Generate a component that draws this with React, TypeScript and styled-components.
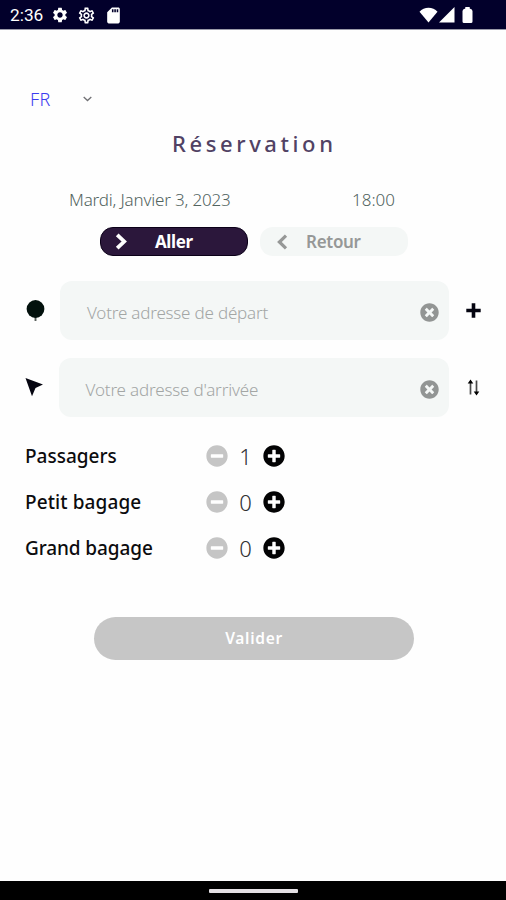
import React from "react";
import styled, { createGlobalStyle } from "styled-components";
import { FaMinusCircle, FaPlusCircle, FaTimesCircle } from "react-icons/fa";
import { MdOutlineSettings, MdSdCard, MdSettings } from "react-icons/md";

const GlobalStyle = createGlobalStyle`
  *, *::before, *::after { box-sizing: border-box; }
  body { margin: 0; background: #fefefe; }
  button { font: inherit; border: 0; padding: 0; background: none; }
  svg { display: block; flex: none; }
`;

const Screen = styled.div`
  display: flex;
  flex-direction: column;
  width: 506px;
  height: 900px;
  overflow: hidden;
  background: #fefefe;
  font-family: "Noto Sans", "Open Sans", sans-serif;
`;

const StatusBar = styled.header`
  display: flex;
  justify-content: space-between;
  height: 30px;
  padding: 1px 33px 0 10px;
  border-bottom: 1px solid #9a9aa8;
  background: #02002b;
  color: #fff;
`;

const StatusGroup = styled.div<{ $gap: number }>`
  display: flex;
  align-items: center;
  gap: ${(p) => p.$gap}px;
`;

const Clock = styled.span`
  width: 33px;
  font: 400 17.3px/28px Roboto, sans-serif;
  white-space: nowrap;
`;

const Content = styled.main`
  display: flex;
  flex: 1;
  flex-direction: column;
  padding-top: 54px;
`;

const Language = styled.button`
  display: flex;
  align-items: center;
  gap: 32px;
  height: 30px;
  padding-left: 30px;
  color: #3c3cf0;
  font-size: 18px;
  font-weight: 300;
  letter-spacing: 0.3px;
  line-height: 30px;
`;

const Title = styled.h1`
  height: 30px;
  margin: 14px 0 0 172px;
  color: #514264;
  font-size: 22px;
  font-weight: 460;
  line-height: 30px;
  letter-spacing: 3.6px;
  white-space: nowrap;
`;

const Schedule = styled.div`
  display: flex;
  height: 26px;
  margin-top: 28px;
  padding-left: 69px;
  color: #52645f;
  font-size: 17px;
  font-weight: 300;
  line-height: 28px;
  white-space: nowrap;
`;

const DateText = styled.span`
  width: 283px;
  letter-spacing: -0.18px;
`;

const TimeText = styled.span`
  letter-spacing: 0;
`;

const Trips = styled.div`
  display: flex;
  gap: 12px;
  margin-top: 15px;
  padding-left: 100px;
`;

const Trip = styled.button<{ $active?: boolean }>`
  display: flex;
  align-items: center;
  gap: ${(p) => (p.$active ? 27 : 18)}px;
  width: 148px;
  height: 29px;
  padding-left: ${(p) => (p.$active ? 14 : 16)}px;
  border: ${(p) => (p.$active ? "1.5px solid #0b0018" : "0")};
  border-radius: 13px;
  background: ${(p) => (p.$active ? "#2b173b" : "#f4f7f6")};
  color: ${(p) => (p.$active ? "#fff" : "#969897")};
  font-size: 17px;
  font-weight: ${(p) => (p.$active ? 700 : 600)};
  letter-spacing: ${(p) => (p.$active ? -0.4 : -0.3)}px;
  line-height: 28px;
`;

const Addresses = styled.div`
  display: flex;
  flex-direction: column;
  gap: 18px;
  margin-top: 25px;
`;

const AddressRow = styled.div`
  display: grid;
  grid-template-columns: 58px 391px 1fr;
  align-items: center;
  height: 59px;
`;

const Lead = styled.div`
  padding-left: 25px;
`;

const Field = styled.div<{ $inset: number }>`
  display: flex;
  align-items: center;
  justify-content: space-between;
  height: 100%;
  margin-left: ${(p) => p.$inset}px;
  padding: 4px 10px 0 27px;
  border-radius: 12px;
  background: #f4f7f6;
`;

const Placeholder = styled.span<{ $spacing: number }>`
  color: #a3a6a5;
  font-size: 17px;
  font-weight: 300;
  letter-spacing: ${(p) => p.$spacing}px;
  white-space: nowrap;
`;

const Trail = styled.div`
  display: flex;
  justify-content: center;
  padding-right: 8px;
`;

const Counters = styled.div`
  display: flex;
  flex-direction: column;
  margin-top: 16px;
`;

const Counter = styled.div`
  display: flex;
  align-items: center;
  height: 46px;
  padding-left: 25px;
  color: #0c0c0e;
`;

const CounterLabel = styled.span<{ $spacing: number }>`
  width: 181px;
  font-size: 19px;
  font-weight: 500;
  letter-spacing: ${(p) => p.$spacing}px;
  white-space: nowrap;
`;

const CounterValue = styled.span`
  width: 35px;
  color: #303033;
  font-size: 22px;
  font-weight: 300;
  text-align: center;
`;

const CounterButton = styled.button<{ $off?: boolean }>`
  color: ${(p) => (p.$off ? "#c5c5c5" : "#030304")};
`;

const Submit = styled.button`
  width: 320px;
  height: 43px;
  margin: 46px 0 0 94px;
  border-radius: 22px;
  background: #c6c6c6;
  color: #fff;
  font-size: 15.5px;
  font-weight: 600;
  letter-spacing: 0.7px;
  line-height: 43px;
`;

const HomeBar = styled.footer`
  display: flex;
  justify-content: center;
  height: 19px;
  padding-top: 8px;
  background: #000;
`;

const HomeHandle = styled.div`
  width: 89px;
  height: 4px;
  border-radius: 1px;
  background: #e4e0e4;
`;

const WifiIcon = () => (
  <svg width="19" height="16" viewBox="0 0 19 16" fill="#fff">
    <path d="M9.500 15.500.5 4.800C5 -.5 14 -.5 18.500 4.800Z" />
  </svg>
);

const SignalIcon = () => (
  <svg width="16" height="16" viewBox="0 0 16 16" fill="#fff">
    <path d="M0 15.500 15.500 0V15.500Z" />
  </svg>
);

const BatteryIcon = () => (
  <svg width="11" height="16" viewBox="0 0 11 16" fill="#fff">
    <path d="M3.300 0h4.400v1.500Q10.500 2 10.500 4v10.500Q10.500 16 9 16H2Q.5 16 .5 14.500V4Q.5 2 3.300 1.500Z" />
  </svg>
);

const Battery = styled.div`
  margin-left: 6px;
`;

const ChevronDown = () => (
  <svg width="9" height="6" viewBox="0 0 9 6" fill="none" stroke="#707074" strokeWidth="1.300">
    <path d="m.7 1 3.800 3.500L8.300 1" />
  </svg>
);

const ForwardIcon = () => (
  <svg width="13" height="17" viewBox="0 0 13 17" fill="none" stroke="currentColor" strokeWidth="3.800">
    <path d="m2.200 1.800 7 6.700-7 6.700" />
  </svg>
);

const BackIcon = () => (
  <svg width="12" height="16" viewBox="0 0 12 16" fill="none" stroke="currentColor" strokeWidth="3.200">
    <path d="M10 1.700 3.400 8l6.600 6.300" />
  </svg>
);

const PlusIcon = () => (
  <svg width="15" height="15" viewBox="0 0 15 15" fill="none" stroke="#040410" strokeWidth="3.600">
    <path d="M7.500 .3v14.400M.3 7.500h14.400" />
  </svg>
);

const DepartureIcon = () => (
  <svg width="21" height="24" viewBox="0 0 21 24">
    <path d="M10.500 17v5" stroke="#5a605d" strokeWidth="1.900" />
    <circle cx="10.500" cy="10" r="8.900" fill="#03110d" />
  </svg>
);

const ArrivalIcon = () => (
  <svg width="20" height="21" viewBox="0 0 20 21" fill="#050510">
    <path d="M.5 1 18 7.500 10.500 11 7 19.200Z" />
  </svg>
);

const SwapIcon = () => (
  <svg width="13" height="17" viewBox="0 0 13 17">
    <path d="M3.500 3v12.500M9.500 1.500v12" stroke="#4a4a4a" strokeWidth="1.700" />
    <path d="M3.500 .5 6.300 4.500H.7ZM9.500 16.500 6.700 12.500h5.600Z" fill="#000" />
  </svg>
);

const addresses = [
  { text: "Votre adresse de départ", inset: 2, spacing: -0.2, lead: <DepartureIcon />, trail: <PlusIcon /> },
  { text: "Votre adresse d'arrivée", inset: 0.5, spacing: -0.16, lead: <ArrivalIcon />, trail: <SwapIcon /> },
];

const counters = [
  { label: "Passagers", value: 1, spacing: 0 },
  { label: "Petit bagage", value: 0, spacing: 0.1 },
  { label: "Grand bagage", value: 0, spacing: -0.1 },
];

export default function App() {
  return (
    <>
      <GlobalStyle />
      <Screen>
        <StatusBar>
          <StatusGroup $gap={8}>
            <Clock>2:36</Clock>
            <MdSettings size={18} />
            <MdOutlineSettings size={19} />
            <MdSdCard size={19} />
          </StatusGroup>
          <StatusGroup $gap={1}>
            <WifiIcon />
            <SignalIcon />
            <Battery>
              <BatteryIcon />
            </Battery>
          </StatusGroup>
        </StatusBar>
        <Content>
          <Language>
            FR
            <ChevronDown />
          </Language>
          <Title>Réservation</Title>
          <Schedule>
            <DateText>Mardi, Janvier 3, 2023</DateText>
            <TimeText>18:00</TimeText>
          </Schedule>
          <Trips>
            <Trip $active>
              <ForwardIcon />
              Aller
            </Trip>
            <Trip>
              <BackIcon />
              Retour
            </Trip>
          </Trips>
          <Addresses>
            {addresses.map((a) => (
              <AddressRow key={a.text}>
                <Lead>{a.lead}</Lead>
                <Field $inset={a.inset}>
                  <Placeholder $spacing={a.spacing}>{a.text}</Placeholder>
                  <FaTimesCircle size={19} color="#929594" />
                </Field>
                <Trail>{a.trail}</Trail>
              </AddressRow>
            ))}
          </Addresses>
          <Counters>
            {counters.map((c) => (
              <Counter key={c.label}>
                <CounterLabel $spacing={c.spacing}>{c.label}</CounterLabel>
                <CounterButton $off>
                  <FaMinusCircle size={22} />
                </CounterButton>
                <CounterValue>{c.value}</CounterValue>
                <CounterButton>
                  <FaPlusCircle size={22} />
                </CounterButton>
              </Counter>
            ))}
          </Counters>
          <Submit>Valider</Submit>
        </Content>
        <HomeBar>
          <HomeHandle />
        </HomeBar>
      </Screen>
    </>
  );
}
